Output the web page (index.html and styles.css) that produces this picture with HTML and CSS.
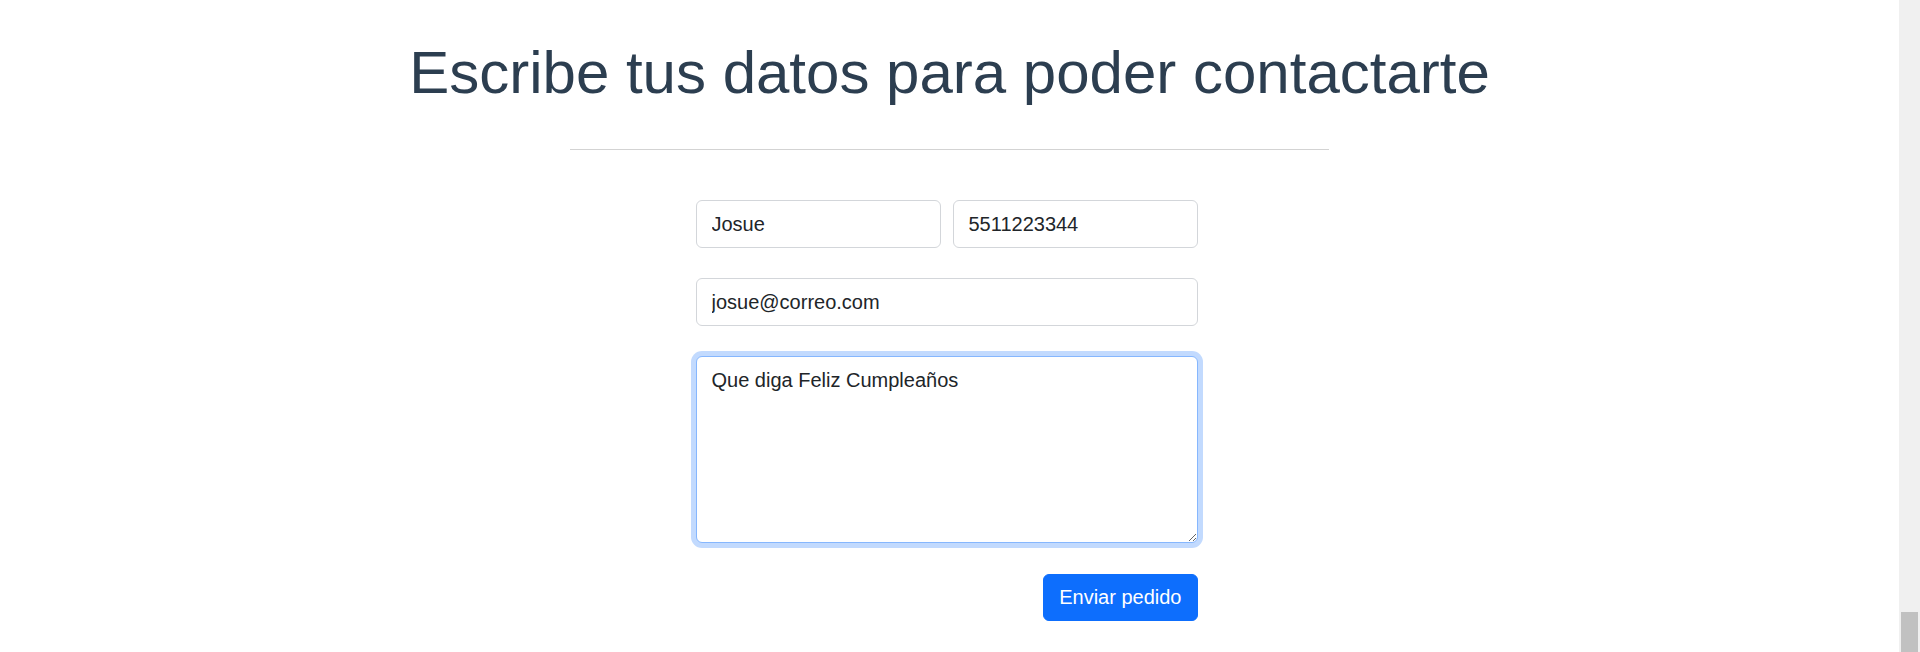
FILE: index.html
```html
<!DOCTYPE html>
<html lang="es">
<head>
<meta charset="utf-8">
<title>Contacto</title>
<link rel="stylesheet" href="styles.css">
</head>
<body>
<div class="page">
  <main class="content">
    <h1 class="title">Escribe tus datos para poder contactarte</h1>
    <hr class="divider">
    <div class="form-wrap">
      <form class="form">
        <div class="row">
          <input class="field" type="text" value="Josue">
          <input class="field" type="text" value="5511223344">
        </div>
        <input class="field" type="email" value="josue@correo.com">
        <textarea class="field area focused">Que diga Feliz Cumpleaños</textarea>
        <div class="actions">
          <button type="button" class="btn">Enviar pedido</button>
        </div>
      </form>
    </div>
  </main>
  <div class="scrollbar"><div class="thumb"></div></div>
</div>
</body>
</html>
```

FILE: styles.css
```css
* { box-sizing: border-box; }
html, body { margin: 0; padding: 0; height: 100%; overflow: hidden; background: #fff; }
body { font-family: "Liberation Sans", Arial, sans-serif; color: #212529; }

.page { display: flex; height: 652px; }
.content { flex: 1; display: flex; flex-direction: column; align-items: center; }

.title {
  margin: 37px 0 0;
  font-size: 60px;
  font-weight: 400;
  line-height: 72px;
  color: #2c3e50;
  text-align: center;
}

.divider {
  width: 759px;
  margin: 40px 0 0;
  border: 0;
  border-top: 1px solid #d3d3d3;
  height: 0;
}

.form-wrap { width: 508px; padding-right: 6px; margin-top: 50px; }
.form { display: flex; flex-direction: column; gap: 30px; }
.row { display: flex; gap: 12px; }
.row .field { flex: 1; min-width: 0; }

.field {
  display: block;
  width: 100%;
  height: 48px;
  padding: 8px 15px;
  font-family: "Liberation Sans", Arial, sans-serif;
  font-size: 20px;
  line-height: 30px;
  color: #212529;
  background: #fff;
  border: 1px solid #d3d6da;
  border-radius: 6px;
  outline: none;
}

.area {
  height: 187px;
  padding: 8px 15px;
  resize: vertical;
}
.focused {
  border-color: #86b7fe;
  box-shadow: 0 0 0 5px #c2dafe;
}

.actions { display: flex; justify-content: flex-end; margin-top: 1px; }
.btn {
  height: 47px;
  padding: 0 15px;
  font-family: "Liberation Sans", Arial, sans-serif;
  font-size: 20px;
  color: #fff;
  background: #0d6efd;
  border: 1px solid #0d6efd;
  border-radius: 6px;
}

.scrollbar {
  width: 21px;
  background: #f0f0f0;
  display: flex;
  flex-direction: column;
  justify-content: flex-end;
  align-items: center;
}
.thumb { width: 17px; height: 40px; background: #c1c1c1; }
```
